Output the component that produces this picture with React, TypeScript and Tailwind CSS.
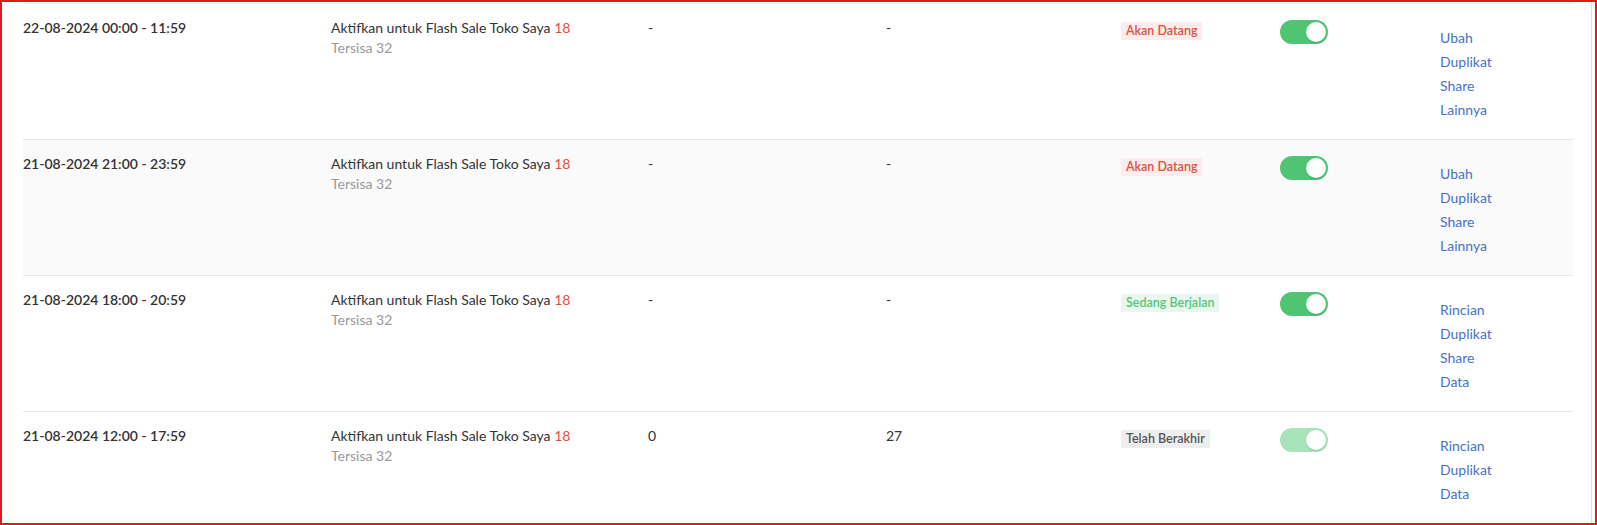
import React from "react";

type Status = "upcoming" | "running" | "ended";

interface Row {
  time: string;
  col3: string;
  col4: string;
  status: Status;
  actions: string[];
}

const rows: Row[] = [
  { time: "22-08-2024 00:00 - 11:59", col3: "-", col4: "-", status: "upcoming", actions: ["Ubah", "Duplikat", "Share", "Lainnya"] },
  { time: "21-08-2024 21:00 - 23:59", col3: "-", col4: "-", status: "upcoming", actions: ["Ubah", "Duplikat", "Share", "Lainnya"] },
  { time: "21-08-2024 18:00 - 20:59", col3: "-", col4: "-", status: "running", actions: ["Rincian", "Duplikat", "Share", "Data"] },
  { time: "21-08-2024 12:00 - 17:59", col3: "0", col4: "27", status: "ended", actions: ["Rincian", "Duplikat", "Data"] },
];

const STATUS = {
  upcoming: { label: "Akan Datang", cls: "text-[#e0503f] bg-[#fdeceb]" },
  running: { label: "Sedang Berjalan", cls: "text-[#55c577] bg-[#e9f8ee]" },
  ended: { label: "Telah Berakhir", cls: "text-[#555555] bg-[#eeeeee]" },
};

function Toggle({ disabled }: { disabled?: boolean }) {
  return (
    <div
      className={`relative w-[48px] h-[24px] rounded-full ${
        disabled ? "bg-[#a9e3bc]" : "bg-[#4fc574]"
      }`}
    >
      {/* knob */}
      <div className="absolute right-[2px] top-[2px] w-[20px] h-[20px] rounded-full bg-white shadow-[0_1px_2px_rgba(0,0,0,0.15)]" />
    </div>
  );
}

export default function App() {
  return (
    <div
      className="w-[1597px] h-[525px] border-2 border-[#e0191b] bg-white overflow-hidden flex text-[14px] text-[#333333]"
      style={{ fontFamily: "'Lato', 'Liberation Sans', sans-serif" }}
    >
      <div className="w-[1571px] pl-[21px] flex-shrink-0">
        <div className="mt-[1px] border-t border-[#f0f0f0]">
          {rows.map((r, i) => {
            const st = STATUS[r.status];
            return (
              <div
                key={i}
                className={`grid grid-cols-[308px_317px_238px_235px_159px_160px_1fr] h-[136px] border-b border-[#e8e8e8] ${
                  i === 1 ? "bg-[#fafafa]" : "bg-white"
                }`}
              >
                <div className="pt-[13px] leading-[22px] font-semibold text-[#333]">
                  {r.time}
                </div>
                <div className="pt-[14px] leading-5">
                  <div>
                    Aktifkan untuk Flash Sale Toko Saya{" "}
                    <span className="text-[#e0503f]">18</span>
                  </div>
                  <div className="text-[#999999]">Tersisa 32</div>
                </div>
                <div className="pt-[13px] leading-[22px]">{r.col3}</div>
                <div className="pt-[13px] leading-[22px]">{r.col4}</div>
                <div className="pt-[15px]">
                  <span
                    className={`inline-block px-[5px] h-[18px] leading-[18px] text-[12.5px] font-semibold ${st.cls}`}
                  >
                    {st.label}
                  </span>
                </div>
                <div className="pt-[16px]">
                  <Toggle disabled={r.status === "ended"} />
                </div>
                <div className="pt-[22px] leading-6 flex flex-col items-start">
                  {r.actions.map((a) => (
                    <span key={a} className="text-[#4473c8] cursor-pointer">
                      {a}
                    </span>
                  ))}
                </div>
              </div>
            );
          })}
        </div>
      </div>
      <div className="ml-[18px] w-px h-full bg-[#e2e2e2]" />
    </div>
  );
}
